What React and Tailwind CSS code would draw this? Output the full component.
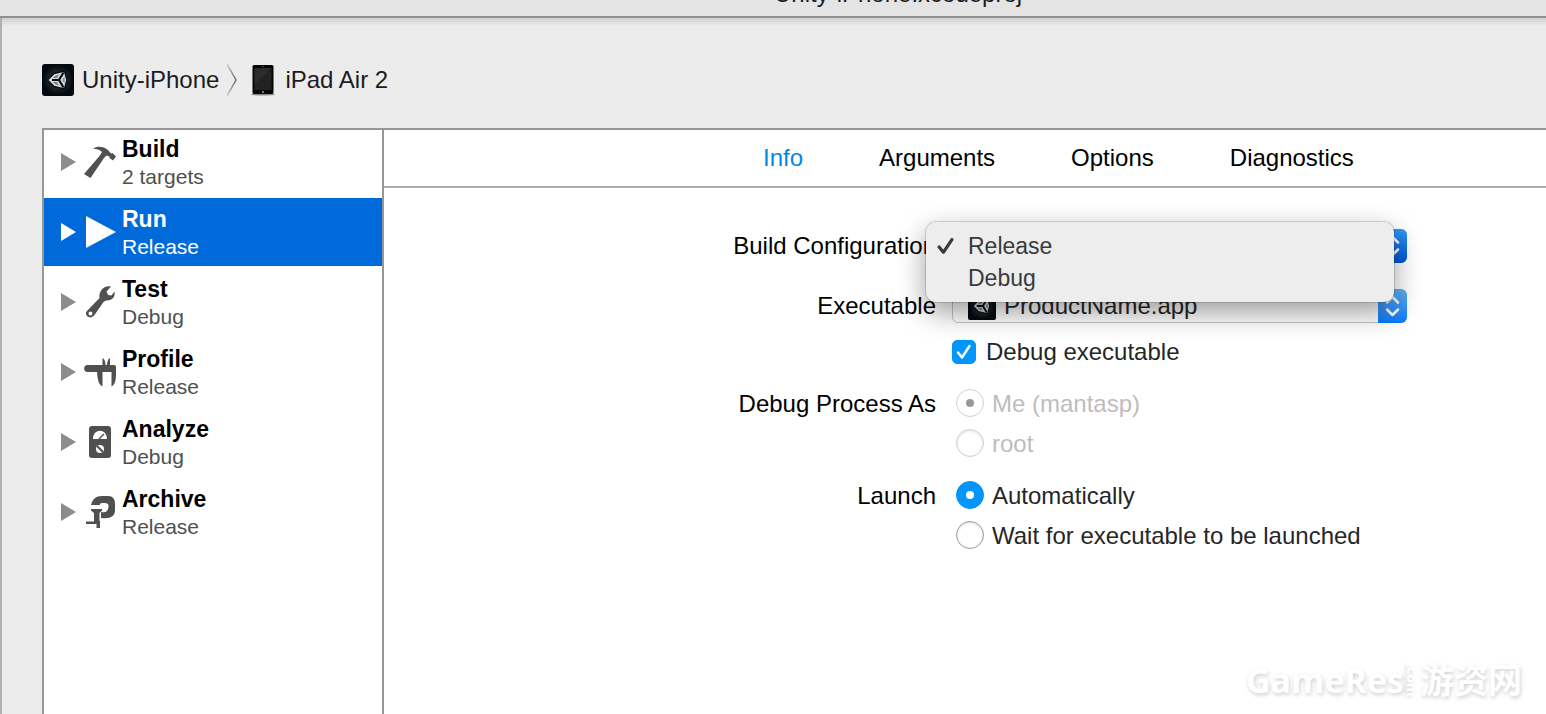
import React, { useState } from "react";

const UnityIcon = ({ className }) => (
    <svg viewBox="0 0 32 32" className={className} aria-hidden="true">
        <defs>
            <radialGradient id="unityGlow">
                <stop offset="0" stopColor="#3a4750" />
                <stop offset="0.55" stopColor="#1d262c" />
                <stop offset="1" stopColor="#05090d" />
            </radialGradient>
        </defs>
        <rect width="32" height="32" rx="3" fill="#05090d" />
        <circle cx="16" cy="16" r="15" fill="url(#unityGlow)" />
        <path
            d="M5.500 16 L12 9.500 L22.500 7 L25 16 L22.500 25 L12 22.500Z"
            fill="#d4d8da"
            stroke="#0b0f12"
            strokeWidth="1.500"
        />
        <path d="M10 16 H17 L21.500 8.500 M17 16 L21.500 23.500" fill="none" stroke="#0b0f12" strokeWidth="2.200" />
        <path d="M13 12 L17 10.500 L15 14 H11Z M13 20 L17 21.500 L15 18 H11Z M22.500 12.500 V19.500 L20.500 16Z" fill="#0b0f12" opacity="0.45" />
    </svg>
);

const IPadIcon = () => (
    <svg viewBox="0 0 24 32" className="h-8 w-6" aria-hidden="true">
        <ellipse cx="12" cy="30.500" rx="12" ry="1" fill="#8a8a8a" />
        <rect x="1.500" y="1" width="21" height="29" rx="1.500" fill="#060606" />
        <rect x="3.500" y="4" width="17" height="22" fill="#222" />
        <path d="M3.500 4 H20.500 L3.500 20Z" fill="#2c2c2c" />
        <circle cx="12" cy="2.500" r="0.600" fill="#999" />
        <rect x="11" y="27" width="2" height="2" fill="#777" />
    </svg>
);

const HammerIcon = () => (
    <path d="M9 2.500 C14 -0.500 20 0.500 24 4 L27 7.500 L28.500 7 L32 10.500 L29 14.500 L25.500 12 L25.500 10.500 L22.500 9.500 L20 12 L6.500 32 L0 28 L15.500 10 L18 6 C16 3.500 12 3 9 2.500Z" />
);

const PlayIcon = () => <path d="M2 0 V32 L32 16Z" />;

const WrenchIcon = () => (
    <path
        fillRule="evenodd"
        d="M27 0.500 L22.500 5.500 L24 9 L27.500 9.500 L30.500 5.500 C31.500 11 28 15 22 14.500 L19.500 16 L10.500 29 C7 34 0 30.500 2.500 25.500 L15.500 12 C14.500 5 20 -1 27 0.500Z M6.500 25.500 A2 2 0 1 0 6.500 29.500 A2 2 0 1 0 6.500 25.500Z"
    />
);

const CaliperIcon = () => (
    <path d="M3.500 9 H18.500 V2 C20.500 3 21.500 6 21.500 9 H23 C23 6 24 3 26 2 V9 H30 Q32 9 32 11 V16 C32 22 32 28 27.500 30.500 V16 H18.500 V30.500 C14 28 13.500 22 13 16 H3.500 C-1 16 -1 9 3.500 9Z" />
);

const MeterIcon = () => (
    <>
        <rect x="5" y="0" width="22" height="32" rx="3" />
        <path d="M9 13 C9 2 23 2 23 13 H17 A2 2 0 0 0 15 13Z" fill="white" />
        <path d="M15 13 L20 8" stroke="currentColor" strokeWidth="1.500" />
        <circle cx="16" cy="23" r="4" fill="white" />
        <path d="M13 20 L19 26" stroke="currentColor" strokeWidth="2" />
    </>
);

const ClampIcon = () => (
    <>
        <path d="M7 9 C8.500 3 12 0 18 0 H24 C29 0 31 3 31 8 V14 C31 20 27 23 17 22 V16 C22 17 24.500 15 24.500 10 C24.500 7 22 6.500 16 7.500 V9Z" />
        <path d="M7 13 H18 V14.500 L15.500 17 V25 H16 V32 H12.500 V28 H2 V25.500 H10 V17 L7 14.500Z" />
    </>
);

const schemes = [
    { name: "Build", detail: "2 targets", icon: HammerIcon },
    { name: "Run", detail: "Release", icon: PlayIcon },
    { name: "Test", detail: "Debug", icon: WrenchIcon },
    { name: "Profile", detail: "Release", icon: CaliperIcon },
    { name: "Analyze", detail: "Debug", icon: MeterIcon },
    { name: "Archive", detail: "Release", icon: ClampIcon },
];

const tabs = ["Info", "Arguments", "Options", "Diagnostics"];

const SchemeRow = ({ scheme, active, onSelect }) => {
    const Icon = scheme.icon;
    return (
        <button
            type="button"
            onClick={onSelect}
            className={`flex h-[68px] w-full items-center pl-[17px] text-left ${
                active ? "bg-[#006adb] text-white" : "text-[#505050]"
            }`}
        >
            <svg
                viewBox="0 0 15 18"
                className={`mr-2 h-[18px] w-[15px] ${active ? "text-white" : "text-[#8c8c8c]"}`}
                fill="currentColor"
                aria-hidden="true"
            >
                <path d="M0 0 V18 L15 9Z" />
            </svg>
            <svg viewBox="0 0 32 32" className="mr-1.5 size-8" fill="currentColor" aria-hidden="true">
                <Icon />
            </svg>
            <span className="flex flex-col pt-0.5">
                <span className={`text-[23px] leading-7 font-bold ${active ? "text-white" : "text-black"}`}>
                    {scheme.name}
                </span>
                <span className="text-[21px] leading-7">{scheme.detail}</span>
            </span>
        </button>
    );
};

const Stepper = ({ className }) => (
    <svg
        viewBox="0 0 29 34"
        className={`pointer-events-none absolute top-0 right-0 h-[34px] w-[29px] rounded-r-md bg-linear-to-b ${className}`}
        fill="none"
        stroke="white"
        strokeWidth="2.500"
        strokeLinecap="round"
        strokeLinejoin="round"
        aria-hidden="true"
    >
        <path d="M9 13.500 L14.500 8 L20 13.500 M9 20.500 L14.500 26 L20 20.500" />
    </svg>
);

const Row = ({ label, htmlFor, className, children }) => (
    <div className={`grid grid-cols-[minmax(0,552px)_minmax(0,1fr)] gap-x-4 ${className}`}>
        {htmlFor ? (
            <label htmlFor={htmlFor} className="text-right leading-[34px]">
                {label}
            </label>
        ) : (
            <span className="text-right leading-[30px]">{label}</span>
        )}
        <div>{children}</div>
    </div>
);

const Radio = ({ name, label, ...props }) => (
    <label className="flex h-7 items-center gap-2 pl-1 leading-7 text-[#262626] has-disabled:text-[#bdbdbd]">
        <input
            type="radio"
            name={name}
            className="flex size-7 shrink-0 appearance-none items-center justify-center rounded-full border border-[#9a9a9a] bg-white shadow-[inset_0_1px_3px_#00000022] before:size-2 before:rounded-full checked:border-[#0096fe] checked:bg-[#0096fe] checked:shadow-none checked:before:bg-white disabled:border-[#d0d0d0] disabled:bg-white disabled:checked:border-[#d0d0d0] disabled:checked:bg-white disabled:checked:before:bg-[#999999]"
            {...props}
        />
        <span className="pt-0.5">{label}</span>
    </label>
);

const App = () => {
    const [active, setActive] = useState("Run");
    const [tab, setTab] = useState("Info");
    const [config, setConfig] = useState("Release");
    const [launch, setLaunch] = useState("auto");

    return (
        <div className="relative flex min-h-screen flex-col overflow-hidden bg-[#ececec] font-['Liberation_Sans',Arial,sans-serif] text-2xl text-black">
            <header className="flex h-[18px] items-end overflow-hidden border-b-2 border-[#8f8f8f] bg-[#e4e4e4] pb-[10px] pl-[774px]">
                <h1 className="leading-6 whitespace-nowrap text-[#1c1c1c]">Unity-iPhone.xcodeproj</h1>
            </header>

            <div className="flex grow flex-col border-l-2 border-[#b0b0b0]">
                <div className="h-2 bg-linear-to-b from-[#d0d0d0] to-[#ececec]" />
                <nav className="flex h-[102px] items-center pt-[6px] pl-10 text-[#1c1c1c]">
                    <UnityIcon className="mr-2 size-8" />
                    <span>Unity-iPhone</span>
                    <svg viewBox="0 0 12 34" className="mr-3 ml-2 h-[34px] w-3" fill="none" aria-hidden="true">
                        <defs>
                            <linearGradient id="crumb" x1="0" y1="0" x2="0" y2="1">
                                <stop offset="0" stopColor="#c8c8c8" />
                                <stop offset="0.5" stopColor="#6a6a6a" />
                                <stop offset="1" stopColor="#c8c8c8" />
                            </linearGradient>
                        </defs>
                        <path d="M0 1 L9 17 L0 33" stroke="url(#crumb)" strokeWidth="1.500" />
                    </svg>
                    <IPadIcon />
                    <span className="ml-2.5">iPad Air 2</span>
                </nav>

                <div className="ml-10 flex grow border-t-2 border-l-2 border-[#979797] bg-white">
                    <aside className="w-[340px] shrink-0 border-r-2 border-[#979797]">
                        <div className="-mt-0.5 flex flex-col gap-0.5">
                            {schemes.map((s) => (
                                <SchemeRow
                                    key={s.name}
                                    scheme={s}
                                    active={active === s.name}
                                    onSelect={() => setActive(s.name)}
                                />
                            ))}
                        </div>
                    </aside>

                    <main className="min-w-0 grow">
                        <div className="flex h-[58px] items-center gap-[76px] border-b-2 border-[#acacac] pl-[379px]">
                            {tabs.map((t) => (
                                <button
                                    key={t}
                                    type="button"
                                    onClick={() => setTab(t)}
                                    className={tab === t ? "text-[#0088e0]" : "text-black"}
                                >
                                    {t}
                                </button>
                            ))}
                        </div>

                        <form className="pt-[41px]">
                            <Row label="Build Configuration" htmlFor="config">
                                <div className="relative w-[455px]">
                                    <select
                                        id="config"
                                        value={config}
                                        onChange={(e) => setConfig(e.target.value)}
                                        className="block h-[34px] w-full appearance-none rounded-md border border-[#c4c4c4] bg-white pl-4"
                                    >
                                        <option>Release</option>
                                        <option>Debug</option>
                                    </select>
                                    <Stepper className="from-[#2f97f8] to-[#0055d8]" />
                                    {/* open menu lies over both selects */}
                                    <ul className="absolute -top-[7px] -left-[26px] z-10 w-[468px] rounded-[10px] bg-[#ededed] pt-2 pb-2 text-[23px] text-[#3a3a3a] shadow-[0_0_0_1px_#00000022,0_10px_28px_#00000066]">
                                        {["Release", "Debug"].map((c) => (
                                            <li key={c}>
                                                <button
                                                    type="button"
                                                    onClick={() => setConfig(c)}
                                                    className="flex h-8 w-full items-center pl-[11px]"
                                                >
                                                    <svg viewBox="0 0 16 16" className="mr-[14px] size-[17px]" fill="none" aria-hidden="true">
                                                        {config === c && (
                                                            <path d="M2 8.500 L6 13.500 L14 1.500" stroke="#3a3a3a" strokeWidth="3" strokeLinecap="round" strokeLinejoin="round" />
                                                        )}
                                                    </svg>
                                                    {c}
                                                </button>
                                            </li>
                                        ))}
                                    </ul>
                                </div>
                            </Row>

                            <Row label="Executable" htmlFor="executable" className="mt-[26px]">
                                <div className="relative w-[455px]">
                                    <select
                                        id="executable"
                                        className="block h-[34px] w-full appearance-none rounded-md border border-[#c4c4c4] bg-white pl-[51px] leading-8 text-[#262626]"
                                    >
                                        <option>ProductName.app</option>
                                    </select>
                                    <UnityIcon className="pointer-events-none absolute top-[3px] left-4 size-7" />
                                    <Stepper className="from-[#5fb0f8] to-[#007bfb]" />
                                </div>
                            </Row>

                            <Row className="mt-[15px]">
                                <label className="flex h-7 items-center gap-[10px] leading-7 text-[#262626]">
                                    <span className="relative size-6">
                                        <input
                                            type="checkbox"
                                            defaultChecked
                                            className="peer block size-6 appearance-none rounded-[5px] border border-[#9a9a9a] bg-white checked:border-[#0096fe] checked:bg-[#0096fe]"
                                        />
                                        <svg viewBox="0 0 24 24" className="pointer-events-none absolute inset-0 hidden size-6 peer-checked:block" fill="none" aria-hidden="true">
                                            <path d="M6 12.500 L10 17.500 L17.500 6" stroke="white" strokeWidth="2.500" strokeLinecap="round" strokeLinejoin="round" />
                                        </svg>
                                    </span>
                                    Debug executable
                                </label>
                            </Row>

                            <Row label="Debug Process As" className="mt-[23px]">
                                <div className="flex flex-col gap-3">
                                    <Radio name="user" label="Me (mantasp)" defaultChecked disabled />
                                    <Radio name="user" label="root" disabled />
                                </div>
                            </Row>

                            <Row label="Launch" className="mt-6">
                                <div className="flex flex-col gap-3">
                                    <Radio
                                        name="launch"
                                        label="Automatically"
                                        checked={launch === "auto"}
                                        onChange={() => setLaunch("auto")}
                                    />
                                    <Radio
                                        name="launch"
                                        label="Wait for executable to be launched"
                                        checked={launch === "wait"}
                                        onChange={() => setLaunch("wait")}
                                    />
                                </div>
                            </Row>
                        </form>
                    </main>
                </div>
            </div>

            <div className="pointer-events-none absolute right-6 bottom-3 flex items-center font-['Open_Sans','Noto_Sans_CJK_SC',sans-serif] text-[34px] leading-[44px] font-bold text-white [text-shadow:1px_2px_4px_#00000030]">
                <span>GameRes</span>
                <span className="text-sm leading-4 [writing-mode:vertical-rl]">.com</span>
                <span>游资网</span>
            </div>
        </div>
    );
};

export default App;
